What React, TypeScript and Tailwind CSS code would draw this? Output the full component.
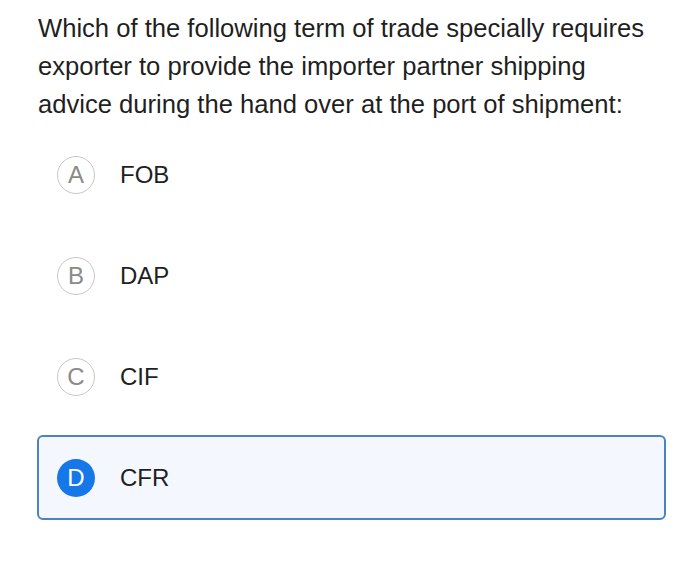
const OPTIONS = [
  { key: 'A', label: 'FOB' },
  { key: 'B', label: 'DAP' },
  { key: 'C', label: 'CIF' },
  { key: 'D', label: 'CFR', selected: true },
];

export default function App() {
  return (
    <div
      className="w-[700px] h-[569px] bg-white text-[#1f1f1f]"
      style={{ fontFamily: '"Liberation Sans", Arial, sans-serif' }}
    >
      <div className="pl-[38px] pr-[30px] pt-[9px]">
        <p className="text-[25.6px] leading-[38px] w-[620px]">
          Which of the following term of trade specially requires exporter to provide the
          importer partner shipping advice during the hand over at the port of shipment:
        </p>

        <div className="mt-[9px] flex flex-col gap-[16px] -ml-[1px] w-[629px]">
          {OPTIONS.map((o) => (
            <div
              key={o.key}
              className={`h-[85px] flex items-center pl-[18px] rounded-[6px] border-2 ${
                o.selected ? 'border-[#4a82c4] bg-[#f4f8fe]' : 'border-transparent'
              }`}
            >
              <div
                className={`w-[38px] h-[38px] rounded-full flex items-center justify-center text-[24px] ${
                  o.selected
                    ? 'bg-[#1677e8] text-white'
                    : 'border-[1.5px] border-[#c8c8c8] text-[#8a8a8a]'
                }`}
              >
                {o.key}
              </div>
              <span className="ml-[25px] text-[24px] text-[#1f1f1f]">{o.label}</span>
            </div>
          ))}
        </div>
      </div>
    </div>
  );
}
